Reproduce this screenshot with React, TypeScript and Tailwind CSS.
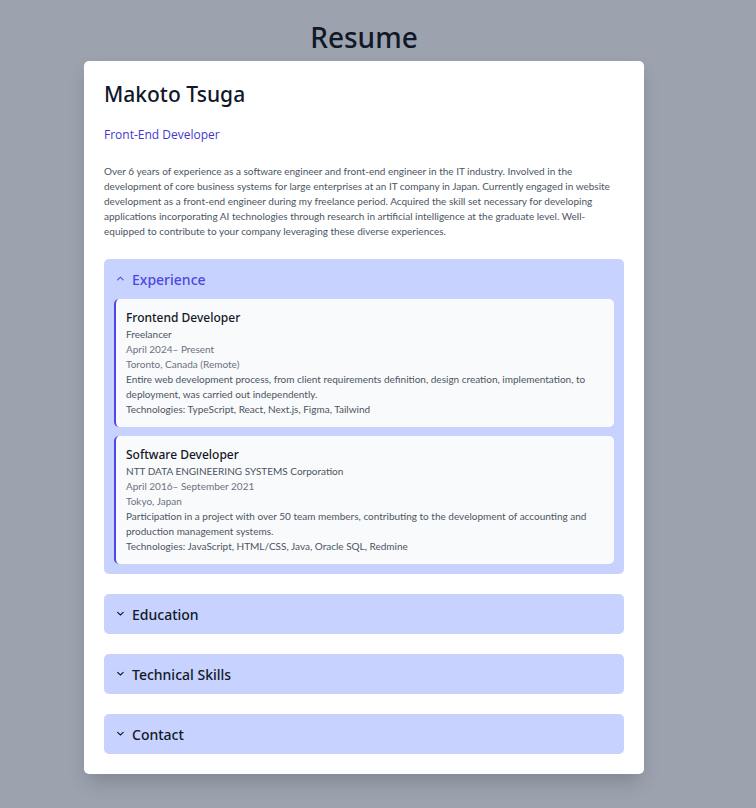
import { useState } from "react";
import type { ReactNode } from "react";

type Job = {
  title: string;
  company: string;
  period: string;
  place: string;
  summary: string;
  technologies: string;
};

const jobs: Job[] = [
  {
    title: "Frontend Developer",
    company: "Freelancer",
    period: "April 2024– Present",
    place: "Toronto, Canada (Remote)",
    summary:
      "Entire web development process, from client requirements definition, design creation, implementation, to deployment, was carried out independently.",
    technologies: "Technologies: TypeScript, React, Next.js, Figma, Tailwind",
  },
  {
    title: "Software Developer",
    company: "NTT DATA ENGINEERING SYSTEMS Corporation",
    period: "April 2016– September 2021",
    place: "Tokyo, Japan",
    summary:
      "Participation in a project with over 50 team members, contributing to the development of accounting and production management systems.",
    technologies: "Technologies: JavaScript, HTML/CSS, Java, Oracle SQL, Redmine",
  },
];

function Chevron({ open }: { open: boolean }) {
  return (
    <svg
      viewBox="0 0 8 8"
      className="h-2 w-2"
      fill="none"
      stroke="currentColor"
      strokeWidth="1.1"
      strokeLinecap="round"
      aria-hidden="true"
    >
      <path d={open ? "M1.6 3.9 L4.4 1.2 L7.2 3.9" : "M1.6 1.3 L4.4 4 L7.2 1.3"} />
    </svg>
  );
}

function Section({
  title,
  defaultOpen = false,
  children,
}: {
  title: string;
  defaultOpen?: boolean;
  children?: ReactNode;
}) {
  const [open, setOpen] = useState(defaultOpen);
  return (
    <section className="rounded-[5px] bg-[#c7d2fe]">
      <h3 className="font-['Noto_Sans',sans-serif] text-sm font-medium">
        <button
          type="button"
          aria-expanded={open}
          onClick={() => setOpen(!open)}
          className={
            open
              ? "flex h-10 w-full items-center gap-2 px-3 pt-0.5 text-[#4f46e5]"
              : "flex h-10 w-full items-center gap-2 px-3 pt-0.5 text-[#111827]"
          }
        >
          <Chevron open={open} />
          {title}
        </button>
      </h3>
      {open && children}
    </section>
  );
}

export default function App() {
  return (
    <main className="flex min-h-screen flex-col items-center bg-[#9ca3af] pt-3.5 pr-7 pb-8 font-['Lato','Noto_Sans',sans-serif] text-[10px] leading-[15px] text-[#4b5563]">
      <h1 className="font-['Noto_Sans',sans-serif] text-[28px] leading-[47px] font-medium text-[#111827]">Resume</h1>
      <article className="flex w-full max-w-[560px] flex-col gap-5 rounded-[5px] bg-white p-5 shadow-[0_10px_20px_-3px_rgba(0,0,0,0.18)]">
        <header>
          <h2 className="font-['Noto_Sans',sans-serif] text-[21px] leading-[27px] font-medium text-[#111827]">
            Makoto Tsuga
          </h2>
          <p className="mt-[17px] font-['Open_Sans',sans-serif] text-xs leading-5 text-[#4338ca]">
            Front-End Developer
          </p>
          <p className="mt-[19px]">
            Over 6 years of experience as a software engineer and front-end engineer in the IT industry. Involved in
            the development of core business systems for large enterprises at an IT company in Japan. Currently engaged
            in website development as a front-end engineer during my freelance period. Acquired the skill set necessary
            for developing applications incorporating AI technologies through research in artificial intelligence at
            the graduate level. Well-equipped to contribute to your company leveraging these diverse experiences.
          </p>
        </header>
        <Section title="Experience" defaultOpen>
          <ul className="flex flex-col gap-[9px] px-2.5 pb-2.5">
            {jobs.map((job) => (
              <li key={job.title} className="rounded-[5px] border-l-2 border-[#4f46e5] bg-[#f9fafb] p-2.5">
                <h4 className="font-['Noto_Sans',sans-serif] text-xs leading-[18px] font-medium text-[#111827]">
                  {job.title}
                </h4>
                <p>{job.company}</p>
                <p className="text-[#6b7280]">{job.period}</p>
                <p className="text-[#6b7280]">{job.place}</p>
                <p>{job.summary}</p>
                <p>{job.technologies}</p>
              </li>
            ))}
          </ul>
        </Section>
        <Section title="Education" />
        <Section title="Technical Skills" />
        <Section title="Contact" />
      </article>
    </main>
  );
}
